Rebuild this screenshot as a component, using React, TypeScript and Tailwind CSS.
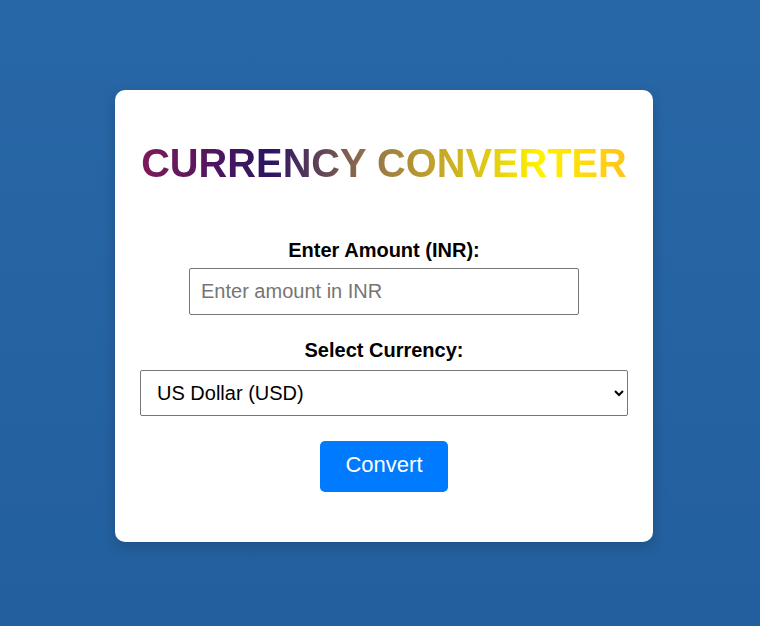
import React, { useState } from 'react'

function App() {
  const [amount, setAmount] = useState('')
  const [currency, setCurrency] = useState('USD')

  return (
    <div className='min-h-screen flex justify-center items-start pt-[90px] pl-[8px] bg-gradient-to-b from-[#2867a7] to-[#235f9e] font-["Liberation_Sans",Arial,sans-serif]'>
      <div className='w-[538px] bg-white rounded-[10px] p-[25px] text-center shadow-[0_4px_14px_rgba(0,0,0,0.18)]'>
        <h1 className='mt-[25px] mb-[53px] text-[39.8px] leading-[46px] font-bold whitespace-nowrap bg-[linear-gradient(to_right,#7e1a5a_0%,#2b1462_27%,#8b6b4e_45%,#c0a22a_60%,#fff200_82%,#ffc31a_100%)] bg-clip-text text-transparent'>
          CURRENCY CONVERTER
        </h1>

        <label htmlFor='amount' className='block text-[20px] leading-[23px] font-bold text-black'>
          Enter Amount (INR):
        </label>
        <input
          id='amount'
          type='number'
          value={amount}
          onChange={(e) => setAmount(e.target.value)}
          placeholder='Enter amount in INR'
          className='block mx-auto mt-[6px] w-[390px] h-[47px] px-[11px] border border-[#767676] rounded-[2px] text-[20px] text-black placeholder:text-[#757575] outline-none'
        />

        <label htmlFor='currency' className='block mt-[24px] text-[20px] leading-[23px] font-bold text-black'>
          Select Currency:
        </label>
        <select
          id='currency'
          value={currency}
          onChange={(e) => setCurrency(e.target.value)}
          className='block w-full mt-[8px] h-[46px] pl-[12px] pr-[6px] border border-[#767676] rounded-[2px] bg-white text-[20px] text-black'
        >
          <option value='USD'>US Dollar (USD)</option>
          <option value='EUR'>Euro (EUR)</option>
          <option value='GBP'>British Pound (GBP)</option>
          <option value='JPY'>Japanese Yen (JPY)</option>
        </select>

        <button className='mt-[25px] mb-[25px] w-[128px] h-[51px] pb-[4px] bg-[#007bff] text-white text-[22px] rounded-[5px] cursor-pointer'>
          Convert
        </button>
      </div>
    </div>
  )
}

export default App
